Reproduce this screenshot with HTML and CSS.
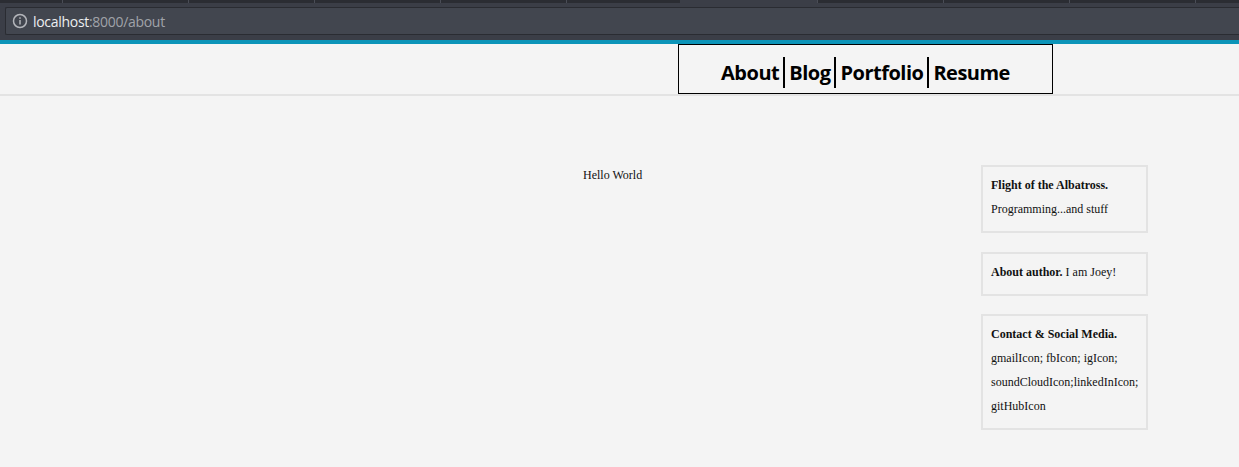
FILE: index.html
```html
<!DOCTYPE html>
<html lang="en">
<head>
<meta charset="utf-8">
<title>About</title>
<link rel="stylesheet" href="styles.css">
</head>
<body>
<div class="chrome">
  <div class="tabstrip">
    <span class="tab"></span><span class="tab"></span><span class="tab"></span><span class="tab"></span><span class="tab"></span><span class="tab tab-gap"></span><span class="tab tab-active"></span><span class="tab"></span><span class="tab"></span><span class="tab"></span><span class="tab tab-last"></span>
  </div>
  <div class="toolbar">
    <div class="urlbar">
      <svg class="info-icon" width="16" height="16" viewBox="0 0 16 16">
        <circle cx="8" cy="8" r="6.5" fill="none" stroke="#b4b6bb" stroke-width="1.5"/>
        <rect x="7.25" y="7" width="1.5" height="4.5" fill="#b4b6bb"/>
        <rect x="7.25" y="4.3" width="1.5" height="1.5" fill="#b4b6bb"/>
      </svg>
      <span class="url-host">localhost</span><span class="url-path">:8000/about</span>
    </div>
  </div>
  <div class="accent"></div>
</div>

<header class="site-header">
  <nav class="nav">
    <ul class="nav-list">
      <li class="nav-item"><a href="#">About</a></li>
      <li class="nav-item"><a href="#">Blog</a></li>
      <li class="nav-item"><a href="#">Portfolio</a></li>
      <li class="nav-item"><a href="#">Resume</a></li>
    </ul>
  </nav>
</header>

<div class="content">
  <main class="main">
    <p class="main-text">Hello World</p>
  </main>
  <aside class="sidebar">
    <section class="widget">
      <strong class="widget-title">Flight of the Albatross.</strong><br>Programming...and stuff
    </section>
    <section class="widget">
      <strong class="widget-title">About author.</strong> I am Joey!
    </section>
    <section class="widget">
      <strong class="widget-title">Contact &amp; Social Media.</strong><br>gmailIcon; fbIcon; igIcon; soundCloudIcon;linkedInIcon; gitHubIcon
    </section>
  </aside>
</div>
</body>
</html>
```

FILE: styles.css
```css
html, body {
  margin: 0;
  padding: 0;
}

body {
  background: #f4f4f4;
  font-family: "Liberation Serif", "Times New Roman", serif;
  font-size: 12px;
  color: #111;
  overflow: hidden;
}

/* Browser chrome */
.chrome {
  background: #3b3e47;
  overflow: hidden;
}

.tabstrip {
  display: flex;
  height: 3px;
  background: #2b2d33;
  overflow: hidden;
}

.tab {
  width: 125px;
  flex: none;
  border-right: 1px solid #4a4d56;
}

.tab:first-child {
  width: 62px;
}

.tab-gap {
  width: 113px;
  border-right: none;
}

.tab-active {
  width: 137px;
  background: #3b3e47;
  border-right: 1px solid #4a4d56;
}

.tab-last {
  flex: 1;
  width: auto;
  border-right: none;
}

.toolbar {
  height: 37px;
  padding: 4px 0 0 5px;
  box-sizing: border-box;
}

.urlbar {
  display: flex;
  align-items: center;
  height: 28px;
  box-sizing: border-box;
  background: #42464f;
  border: 1px solid #2a2c32;
  border-right: none;
  border-radius: 2px 0 0 2px;
  padding-left: 6px;
  font-family: "Open Sans", "DejaVu Sans", sans-serif;
  font-size: 14px;
  letter-spacing: -0.3px;
}

.info-icon {
  flex: none;
  margin-right: 5px;
}

.url-host {
  color: #eceef0;
}

.url-path {
  color: #a0a3a9;
}

.accent {
  height: 4px;
  background: #0c94b8;
}

/* Site header */
.site-header {
  display: flex;
  justify-content: flex-end;
  padding-right: 186px;
  border-bottom: 2px solid #e3e3e3;
}

.nav {
  width: 375px;
  height: 50px;
  box-sizing: border-box;
  border: 1px solid #000;
  padding-top: 12px;
}

.nav-list {
  display: flex;
  justify-content: center;
  list-style: none;
  margin: 0;
  padding: 0;
}

.nav-item {
  padding: 0 4px;
  line-height: 31px;
  font-family: "Open Sans", "DejaVu Sans", sans-serif;
  font-weight: 700;
  font-size: 20px;
  letter-spacing: -0.5px;
}

.nav-item + .nav-item {
  border-left: 2px solid #000;
}

.nav-item a {
  color: #000;
  text-decoration: none;
}

/* Content */
.content {
  display: grid;
  grid-template-columns: 1fr 167px;
  padding-right: 91px;
}

.main {
  padding-left: 583px;
  padding-top: 67px;
}

.main-text {
  margin: 0;
  line-height: 24px;
}

.sidebar {
  display: flex;
  flex-direction: column;
  gap: 18.5px;
  padding-top: 69px;
}

.widget {
  border: 2px solid #e3e3e3;
  padding: 6px 7px 10px 8px;
  line-height: 24px;
}

.widget-title {
  font-weight: 700;
}
```
